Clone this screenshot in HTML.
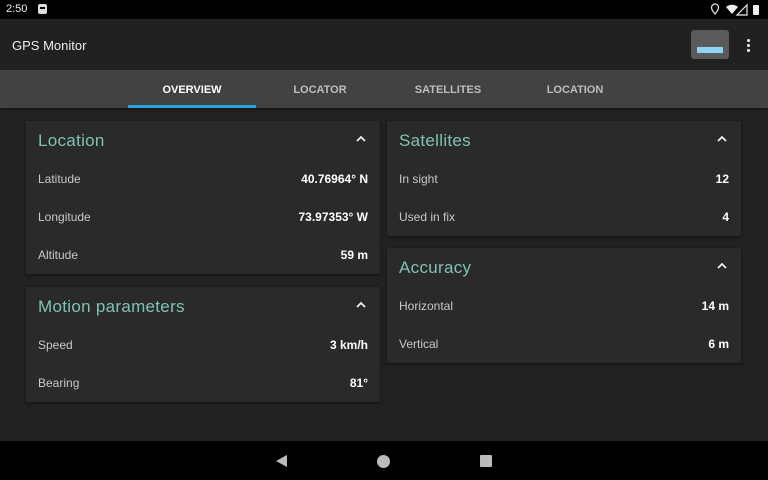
<!DOCTYPE html>
<html><head><meta charset="utf-8"><style>
*{margin:0;padding:0;box-sizing:border-box}
body{width:768px;height:480px;overflow:hidden;background:#222;font-family:"Liberation Sans",sans-serif;position:relative;color:#fff}
.abs{position:absolute}
.status{left:0;top:0;width:768px;height:19px;background:#000}
.appbar{left:0;top:19px;width:768px;height:51px;background:#212121}
.tabs{left:0;top:70px;width:768px;height:38px;background:#424242;box-shadow:0 2px 3px rgba(0,0,0,.4)}
.tab{position:absolute;top:1px;height:38px;line-height:38px;font-size:11px;font-weight:bold;color:#bdbdbd;text-align:center;width:128px}
.card{position:absolute;background:#2a2a2a;box-shadow:0 1px 3px rgba(0,0,0,.5)}
.ttl{position:absolute;left:12px;top:10px;font-size:17px;color:#7ec3b2;letter-spacing:.3px}
.chev{position:absolute;right:14px;top:14px}
.row{position:absolute;left:12px;right:12px;height:20px;font-size:12px}
.row .l{position:absolute;left:0;color:#c8c8c8}
.row .r{position:absolute;right:0;font-weight:bold;color:#fff}
.nav{left:0;top:441px;width:768px;height:39px;background:#000}
</style></head><body>
<div class="abs status">
<div class="abs" style="left:6px;top:3px;font-size:11px;color:#eee">2:50</div>
<div class="abs" style="left:38px;top:4px;width:9px;height:10px;background:#ddd;border-radius:2px"><div style="margin:3px 2px;height:2px;background:#000"></div></div>
<svg class="abs" style="left:709px;top:3px" width="58" height="13">
<path d="M6 1a3.5 3.5 0 0 0-3.5 3.5C2.5 7 6 11 6 11s3.5-4 3.5-6.5A3.5 3.5 0 0 0 6 1z" fill="none" stroke="#ddd" stroke-width="1.3"/>
<path d="M17 4a9 9 0 0 1 12 0l-6 7z" fill="#eee"/>
<path d="M38 2v10h-10z" fill="none" stroke="#eee" stroke-width="1.2"/>
<rect x="44" y="2" width="6" height="10" rx="1" fill="#eee"/>
</svg>
</div>
<div class="abs appbar">
<div class="abs" style="left:12px;top:19px;font-size:13px;color:#eee">GPS Monitor</div>
<div class="abs" style="left:691px;top:11px;width:38px;height:29px;background:#5a5a5a;border-radius:3px"><div style="position:absolute;left:6px;top:17px;width:26px;height:6px;background:#8fd3f5"></div></div>
<div class="abs" style="left:747px;top:20px;width:3px;height:3px;background:#eee;border-radius:50%;box-shadow:0 5px 0 #eee,0 10px 0 #eee"></div>
</div>
<div class="abs tabs">
<div class="tab" style="left:128px;color:#fff">OVERVIEW</div>
<div class="tab" style="left:256px">LOCATOR</div>
<div class="tab" style="left:384px">SATELLITES</div>
<div class="tab" style="left:511px">LOCATION</div>
<div class="abs" style="left:128px;top:35px;width:128px;height:3px;background:#2aa3db"></div>
</div>

<div class="card" style="left:26px;top:121px;width:354px;height:153px">
<div class="ttl">Location</div>
<svg class="chev" width="10" height="8"><path d="M1 6l4-4 4 4" fill="none" stroke="#eee" stroke-width="1.8"/></svg>
<div class="row" style="top:51px"><span class="l">Latitude</span><span class="r">40.76964° N</span></div>
<div class="row" style="top:89px"><span class="l">Longitude</span><span class="r">73.97353° W</span></div>
<div class="row" style="top:127px"><span class="l">Altitude</span><span class="r">59 m</span></div>
</div>
<div class="card" style="left:26px;top:287px;width:354px;height:115px">
<div class="ttl">Motion parameters</div>
<svg class="chev" width="10" height="8"><path d="M1 6l4-4 4 4" fill="none" stroke="#eee" stroke-width="1.8"/></svg>
<div class="row" style="top:51px"><span class="l">Speed</span><span class="r">3 km/h</span></div>
<div class="row" style="top:89px"><span class="l">Bearing</span><span class="r">81°</span></div>
</div>
<div class="card" style="left:387px;top:121px;width:354px;height:115px">
<div class="ttl">Satellites</div>
<svg class="chev" width="10" height="8"><path d="M1 6l4-4 4 4" fill="none" stroke="#eee" stroke-width="1.8"/></svg>
<div class="row" style="top:51px"><span class="l">In sight</span><span class="r">12</span></div>
<div class="row" style="top:89px"><span class="l">Used in fix</span><span class="r">4</span></div>
</div>
<div class="card" style="left:387px;top:248px;width:354px;height:115px">
<div class="ttl">Accuracy</div>
<svg class="chev" width="10" height="8"><path d="M1 6l4-4 4 4" fill="none" stroke="#eee" stroke-width="1.8"/></svg>
<div class="row" style="top:51px"><span class="l">Horizontal</span><span class="r">14 m</span></div>
<div class="row" style="top:89px"><span class="l">Vertical</span><span class="r">6 m</span></div>
</div>

<div class="abs nav">
<svg class="abs" style="left:275px;top:13px" width="14" height="14"><path d="M12 1v12L1 7z" fill="#bbb"/></svg>
<div class="abs" style="left:377px;top:14px;width:13px;height:13px;border-radius:50%;background:#bbb"></div>
<div class="abs" style="left:480px;top:14px;width:12px;height:12px;border-radius:1px;background:#bbb"></div>
</div>
</body></html>
